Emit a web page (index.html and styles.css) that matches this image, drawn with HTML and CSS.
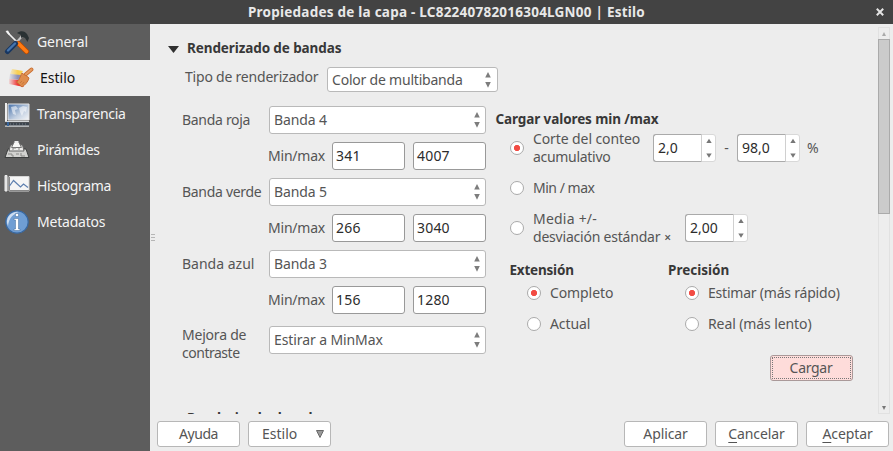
FILE: index.html
```html
<!DOCTYPE html>
<html lang="es">
<head>
<meta charset="utf-8">
<title>Propiedades de la capa</title>
<link rel="stylesheet" href="styles.css">
</head>
<body>
<svg width="0" height="0" class="defs" aria-hidden="true">
  <defs>
    <linearGradient id="sky" x1="0" y1="0" x2="1" y2="1"><stop offset="0" stop-color="#446fa8"/><stop offset=".6" stop-color="#c4d1e2"/><stop offset="1" stop-color="#f5f6f7"/></linearGradient>
    <linearGradient id="paint" x1="0" y1="0" x2="1" y2="0"><stop offset="0" stop-color="#ededed"/><stop offset=".7" stop-color="#ededed" stop-opacity="0"/></linearGradient>
    <symbol id="updown" viewBox="0 0 6 16"><path d="M3 0 5.800 5.500H.2zM.2 10H5.800L3 15.700z" fill="#7d7d7d"/></symbol>
    <symbol id="spinarrows" viewBox="0 0 6 20"><path d="M3 .8 5.700 5H.3zM.3 15.500H5.700L3 19.700z" fill="#777"/></symbol>
  </defs>
</svg>
<div class="titlebar">
  <span class="title">Propiedades de la capa - LC82240782016304LGN00 | Estilo</span>
  <svg class="close" width="8" height="8" viewBox="0 0 8 8"><path d="M.8.8 7.200 7.200M7.200.8.8 7.200" stroke="#e4e4e4" stroke-width="2"/></svg>
</div>
<div class="window">
  <nav class="sidebar">
    <div class="tab">
      <svg width="26" height="26" viewBox="0 0 26 26"><path d="M3 3 14 14" stroke="#eee" stroke-width="1.700"/><path d="M1.500 2 4 1.500 6 5 5 6z" fill="#f5f5f5"/><path d="M19 6 12 14" stroke="#c6c6c6" stroke-width="2"/><path d="M14.500 14.500 22.500 22.500" stroke="#b84800" stroke-width="5" stroke-linecap="round"/><path d="M14.500 14.500 22.500 22.500" stroke="#ff7c13" stroke-width="3.600" stroke-linecap="round"/><path d="M11.500 14.500 3.500 22.500" stroke="#183762" stroke-width="5" stroke-linecap="round"/><path d="M11 14.500 4 21.500" stroke="#4675ad" stroke-width="2.400" stroke-linecap="round"/><path d="M13 4C17 1 21 2 23 5L25 9 23.500 13 21 9 19 8 17 9 17 6z" fill="#293133"/></svg>
      <span class="tight1">General</span>
    </div>
    <div class="tab active">
      <svg width="26" height="26" viewBox="0 0 26 26"><path d="M4 4 15 6 12 11 2 9z" fill="#f9cf50"/><path d="M2 9 13 10 12 15 1 14z" fill="#8d8fb4"/><path d="M1 14 10 15 16 22 1 19z" fill="#f03232"/><path d="M0 3H14V21H0z" fill="url(#paint)"/><path d="M17.500 9.500 23.500 4.500" stroke="#c96d2f" stroke-width="3.800" stroke-linecap="round"/><path d="M17.500 9.500 23.500 4.500" stroke="#e59b61" stroke-width="2.200" stroke-linecap="round"/><path d="M14 8C16 10 18 10 21 13 20 17 17 20 14 22L8.500 17C11 16 12 12 14 8z" fill="#df8d4c" stroke="#c86e32"/><path d="M12 18 14 16M14 19.500 16 17" stroke="#c9783d"/></svg>
      <span>Estilo</span>
    </div>
    <div class="tab">
      <svg width="26" height="26" viewBox="0 0 26 26"><path d="M4 3H25V19H4z" fill="url(#sky)" stroke="#e5e5e5"/><path d="M7 6 12 5 14 8 11 9 12 14 9 13 8 10zM15 7 19 5 23 6 22 11 20 10 18 15 16 11z" fill="#fff" opacity=".55"/><path d="M1 2H3V21H1z" fill="#eee"/><path d="M1 21.500H25V25.500H1z" fill="#3c444d"/><path d="M1 20.500H25M1 25.200H25" stroke="#d4d6d8" stroke-width="1.200"/><path d="M6 23H24" stroke="#76808a" stroke-dasharray="1 2"/><path d="M4 21V25" stroke="#36649b" stroke-width="2"/></svg>
      <span class="tight3">Transparencia</span>
    </div>
    <div class="tab">
      <svg width="26" height="26" viewBox="0 0 26 26"><path d="M4 12H22L25 20.500H1z" fill="#d2d2d0" stroke="#3d3f3f"/><path d="M6.500 8H18.500L20 14H5z" fill="#eeeeec" stroke="#666"/><path d="M10 5.500H15L17.500 10.500H7.500z" fill="#f8f8f6" stroke="#777"/><path d="M10.500 4H14.500V6H10.500z" fill="#eee"/><path d="M4 17H8V19H10M12 17H15M17 16V19H21M9 13V11H12M15 11V13" stroke="#898987" fill="none"/></svg>
      <span class="tight3">Pirámides</span>
    </div>
    <div class="tab">
      <svg width="26" height="26" viewBox="0 0 26 26"><path d="M1 2.500H3V18H1z" fill="#ddd" stroke="#eee"/><path d="M5 3.500H25V18H5z" fill="#f5f5f5" stroke="#d5d5d5"/><path d="M5.500 4V17.500H25" stroke="#888" fill="none"/><path d="M5.500 13 9.500 7.500 16.500 14 19.500 11 24 14.500" stroke="#5d7faf" fill="none" stroke-width="1.200"/></svg>
      <span class="tight3">Histograma</span>
    </div>
    <div class="tab">
      <svg width="26" height="26" viewBox="0 0 26 26"><circle cx="13" cy="13" r="11.200" fill="#6f9ed4" stroke="#38679f" stroke-width="1.200"/><path d="M3 14A10 10 0 0 1 15 3C9 5 5 9 4 17z" fill="#fff" opacity=".65"/><path d="M11 9.500H14.500V20H16V21.500H10V20H11.500V11H10V9.500zM11.500 4.500H14.500V7.500H11.500z" fill="#fff" stroke="#426a99" stroke-width=".5"/></svg>
      <span class="tight2">Metadatos</span>
    </div>
  </nav>
  <div class="splitter"><i></i><i></i><i></i></div>
  <main class="main">
    <div class="scrollarea">
      <div class="viewport">
        <div class="heading"><svg width="11" height="7" viewBox="0 0 11 7"><path d="M0 0H11L5.500 7z" fill="#303030"/></svg><b class="tight1">Renderizado de bandas</b></div>
        <div class="renderer"><span class="tight2">Tipo de renderizador</span><div class="combo"><span class="tight2">Color de multibanda</span><svg width="6" height="16"><use href="#updown"/></svg></div></div>
        <div class="columns">
          <section class="bands">
            <label class="tight3">Banda roja</label>
            <div class="combo"><span class="tight1">Banda 4</span><svg width="6" height="16"><use href="#updown"/></svg></div>
            <div class="minmax"><span class="tight2">Min/max</span><div class="input">341</div><div class="input">4007</div></div>
            <label class="tight3">Banda verde</label>
            <div class="combo"><span class="tight1">Banda 5</span><svg width="6" height="16"><use href="#updown"/></svg></div>
            <div class="minmax"><span class="tight2">Min/max</span><div class="input">266</div><div class="input">3040</div></div>
            <label>Banda azul</label>
            <div class="combo"><span class="tight1">Banda 3</span><svg width="6" height="16"><use href="#updown"/></svg></div>
            <div class="minmax last"><span class="tight2">Min/max</span><div class="input">156</div><div class="input">1280</div></div>
            <label><span class="tight2">Mejora de</span><br><span class="tight4">contraste</span></label>
            <div class="combo"><span class="tight1">Estirar a MinMax</span><svg width="6" height="16"><use href="#updown"/></svg></div>
          </section>
          <section class="load">
            <b class="tight1">Cargar valores min /max</b>
            <div class="option first"><i class="radio on"></i><span class="caption wide"><span class="tight1">Corte del conteo</span><br><span class="tight3">acumulativo</span></span><div class="spin"><span>2,0</span><em><svg width="6" height="20"><use href="#spinarrows"/></svg></em></div><span class="dash">-</span><div class="spin"><span>98,0</span><em><svg width="6" height="20"><use href="#spinarrows"/></svg></em></div><span class="percent">%</span></div>
            <div class="option"><i class="radio"></i><span class="caption tight4">Min / max</span></div>
            <div class="option"><i class="radio"></i><span class="caption wider"><span class="loose">Media +/-</span><br><span class="tight2">desviación estándar</span><small>×</small></span><div class="spin"><span>2,00</span><em><svg width="6" height="20"><use href="#spinarrows"/></svg></em></div></div>
            <div class="groups">
              <div class="group"><b class="tight2">Extensión</b><div class="choice"><i class="radio on"></i><span class="tight1">Completo</span></div><div class="choice"><i class="radio"></i><span class="tight1">Actual</span></div></div>
              <div class="group"><b>Precisión</b><div class="choice"><i class="radio on"></i><span class="tight2">Estimar (más rápido)</span></div><div class="choice"><i class="radio"></i><span class="tight1">Real (más lento)</span></div></div>
            </div>
            <div class="button primary"><span class="tight3">Cargar</span></div>
          </section>
        </div>
        <b class="next tight1">Renderizado de color</b>
      </div>
      <div class="scrollbar"><span class="up"><svg width="4" height="4"><path d="M2 0 4 4H0z" fill="#aaa"/></svg></span><span class="thumb"></span><span class="down"><svg width="4" height="4"><path d="M0 0H4L2 4z" fill="#777"/></svg></span></div>
    </div>
    <footer class="footer">
      <div class="button"><span class="tight4">Ayuda</span></div>
      <div class="button menu"><span>Estilo</span><svg width="8" height="8"><path d="M.5.5H7.500L4 7.500z" fill="#999" stroke="#686868"/></svg></div>
      <div class="button push"><span class="tight1">Aplicar</span></div>
      <div class="button"><span class="tight1"><u>C</u>ancelar</span></div>
      <div class="button"><span class="tight1"><u>A</u>ceptar</span></div>
    </footer>
  </main>
</div>
</body>
</html>
```
FILE: styles.css
```css
* { box-sizing: border-box; }
body { margin: 0; width: 893px; height: 451px; overflow: hidden; background: #ededed; color: #555; font: 14px/18px "Noto Sans", sans-serif; white-space: nowrap; }
svg { display: block; flex: none; }
.defs { position: absolute; }
b { display: block; color: #383838; font-size: 13.5px; font-weight: 700; }
.tight1 { letter-spacing: -.1px; }
.tight2 { letter-spacing: -.21px; }
.tight3 { letter-spacing: -.3px; }
.tight4 { letter-spacing: -.48px; }
.loose { letter-spacing: .22px; }
.titlebar { height: 24px; background: #434343; color: #e8e8e8; display: flex; align-items: center; padding-right: 9px; font-size: 13.5px; font-weight: 700; letter-spacing: .235px; }
.title { flex: 1; text-align: center; padding-left: 17px; }
.window { display: flex; height: 427px; }
.sidebar { width: 150px; background: #5d5d5d; color: #f4f4f4; }
.tab { height: 36px; display: flex; align-items: center; gap: 7px; padding-left: 4px; }
.tab.active { background: #ededed; color: #111; padding-left: 8px; gap: 6px; }
.splitter { width: 7px; display: flex; flex-direction: column; gap: 2px; padding: 210px 0 0 1px; }
.splitter i { width: 4px; height: 1px; background: #b6b6b6; }
.main { flex: 1; min-width: 0; }
.scrollarea { height: 390px; display: flex; justify-content: space-between; padding-right: 3px; }
.viewport { width: 704px; height: 390px; overflow: hidden; }
.heading { display: flex; align-items: center; gap: 8px; padding: 15px 0 0 11px; height: 33px; }
.heading svg { margin-top: 2px; }
.renderer { display: flex; padding: 10px 0 0 28px; height: 49px; }
.renderer > span { padding-top: 1px; }
.renderer .combo { width: 171px; height: 25px; margin-left: auto; margin-right: 363px; padding-right: 6px; }
.combo { height: 28px; display: flex; align-items: center; justify-content: space-between; background: #fff; border: 1px solid #b9b9b9; border-radius: 3px; padding: 0 5px 0 4px; }
.columns { display: flex; }
.bands { width: 304px; margin-left: 25px; margin-right: 9.5px; display: grid; grid-template-columns: 87px 217px; row-gap: 8px; align-content: start; }
.bands label { align-self: center; }
.minmax { grid-column: 1 / 3; display: flex; align-items: center; gap: 8px; }
.minmax span { width: 56px; margin-left: 86px; }
.minmax.last { margin-bottom: 4px; }
.input { width: 73px; height: 28px; background: #fff; border: 1px solid #999; border-radius: 3px; color: #2c2c2c; padding: 4px 3px; letter-spacing: .2px; }
.load { padding-top: 4px; width: 357.5px; }
.option { height: 28px; display: flex; align-items: center; margin-bottom: 12px; padding-left: 14.5px; }
.option.first { margin-top: 6px; }
.radio { flex: none; width: 14px; height: 14px; border-radius: 50%; border: 1px solid #aaa; background: #fff; }
.radio.on { background: radial-gradient(circle, #f24c44 0 2.800px, #fff 3.400px); }
.caption { margin-left: 9px; }
.wide { width: 120px; }
.wider { width: 152px; }
.spin { width: 63px; height: 28px; border: 1px solid #d8d8d8; border-radius: 3px; background: #fff; color: #2c2c2c; display: flex; }
.spin span { width: 49px; height: 28px; margin: -1px 0 0 -1px; padding: 4px; border: 1px solid #aaa; border-right-color: #d0d0d0; border-radius: 3px 0 0 3px; }
.spin em { padding: 3px 0 0 4px; }
.dash { width: 21px; text-align: center; }
.percent { margin-left: 7px; }
small { font-size: 12px; font-weight: 600; line-height: 1; margin-left: 4px; }
.groups { display: flex; padding: 7px 0 0 14px; }
.group { width: 158.5px; }
.choice { display: flex; align-items: center; gap: 9px; padding-left: 17.5px; height: 18px; margin: 5px 0 13px; }
.group + .group .choice { padding-left: 17px; }
.button { width: 83px; height: 26px; display: flex; align-items: center; justify-content: center; background: #fff; border: 1px solid #b7b7b7; border-radius: 3px; }
.primary { margin: 9px .5px 0 auto; background: #fedcda; border-color: #a99; outline: 1px dotted #777; outline-offset: -3px; }
.next { margin: 28px 0 0 30px; }
.scrollbar { width: 12px; height: 387px; margin-top: 3px; border: 1px solid #e1e1e1; display: flex; flex-direction: column; }
.up, .down { height: 11px; display: flex; align-items: center; justify-content: center; }
.thumb { height: 175px; margin: 0 -1px; border: 1px solid #aaa; background: #cbcbcb; }
.down { margin-top: auto; }
.footer { display: flex; gap: 8px; padding: 7px 4px 0 0; }
.push { margin-left: auto; }
.menu { justify-content: space-between; padding: 0 6px 0 13px; }
u { text-underline-offset: 3px; }
```
